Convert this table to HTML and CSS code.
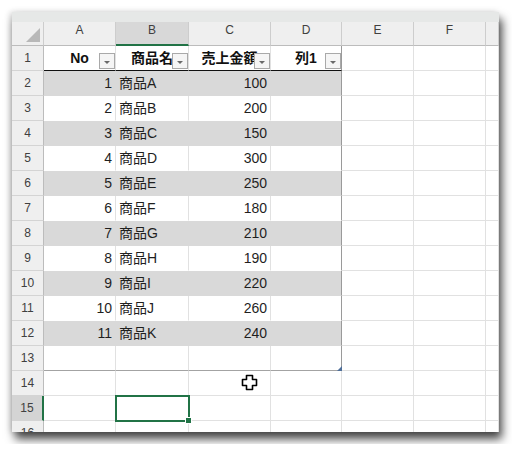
FILE: index.html
```html
<!DOCTYPE html>
<html lang="ja">
<head>
<meta charset="utf-8">
<link rel="stylesheet" href="styles.css">
</head>
<body>
<div class="window">
  <div class="strip"></div>
  <div class="sheet">
    <div class="row colhdr">
      <div class="c ch corner"><span class="tri"></span></div>
      <div class="c ch">A</div>
      <div class="c ch sel">B</div>
      <div class="c ch">C</div>
      <div class="c ch">D</div>
      <div class="c ch">E</div>
      <div class="c ch">F</div>
      <div class="c ch"></div>
    </div>
    <div class="row">
      <div class="c rh">1</div>
      <div class="c hd">No<span class="fb"></span></div>
      <div class="c hd">商品名<span class="fb"></span></div>
      <div class="c hd">売上金額<span class="fb"></span></div>
      <div class="c hd last">列1<span class="fb"></span></div>
      <div class="c"></div><div class="c"></div><div class="c"></div>
    </div>
    <div class="row">
      <div class="c rh">2</div>
      <div class="c band num">1</div><div class="c band txt">商品A</div><div class="c band num">100</div><div class="c band last"></div>
      <div class="c"></div><div class="c"></div><div class="c"></div>
    </div>
    <div class="row">
      <div class="c rh">3</div>
      <div class="c wt num">2</div><div class="c wt txt">商品B</div><div class="c wt num">200</div><div class="c wt last"></div>
      <div class="c"></div><div class="c"></div><div class="c"></div>
    </div>
    <div class="row">
      <div class="c rh">4</div>
      <div class="c band num">3</div><div class="c band txt">商品C</div><div class="c band num">150</div><div class="c band last"></div>
      <div class="c"></div><div class="c"></div><div class="c"></div>
    </div>
    <div class="row">
      <div class="c rh">5</div>
      <div class="c wt num">4</div><div class="c wt txt">商品D</div><div class="c wt num">300</div><div class="c wt last"></div>
      <div class="c"></div><div class="c"></div><div class="c"></div>
    </div>
    <div class="row">
      <div class="c rh">6</div>
      <div class="c band num">5</div><div class="c band txt">商品E</div><div class="c band num">250</div><div class="c band last"></div>
      <div class="c"></div><div class="c"></div><div class="c"></div>
    </div>
    <div class="row">
      <div class="c rh">7</div>
      <div class="c wt num">6</div><div class="c wt txt">商品F</div><div class="c wt num">180</div><div class="c wt last"></div>
      <div class="c"></div><div class="c"></div><div class="c"></div>
    </div>
    <div class="row">
      <div class="c rh">8</div>
      <div class="c band num">7</div><div class="c band txt">商品G</div><div class="c band num">210</div><div class="c band last"></div>
      <div class="c"></div><div class="c"></div><div class="c"></div>
    </div>
    <div class="row">
      <div class="c rh">9</div>
      <div class="c wt num">8</div><div class="c wt txt">商品H</div><div class="c wt num">190</div><div class="c wt last"></div>
      <div class="c"></div><div class="c"></div><div class="c"></div>
    </div>
    <div class="row">
      <div class="c rh">10</div>
      <div class="c band num">9</div><div class="c band txt">商品I</div><div class="c band num">220</div><div class="c band last"></div>
      <div class="c"></div><div class="c"></div><div class="c"></div>
    </div>
    <div class="row">
      <div class="c rh">11</div>
      <div class="c wt num">10</div><div class="c wt txt">商品J</div><div class="c wt num">260</div><div class="c wt last"></div>
      <div class="c"></div><div class="c"></div><div class="c"></div>
    </div>
    <div class="row">
      <div class="c rh">12</div>
      <div class="c band num">11</div><div class="c band txt">商品K</div><div class="c band num">240</div><div class="c band last"></div>
      <div class="c"></div><div class="c"></div><div class="c"></div>
    </div>
    <div class="row">
      <div class="c rh">13</div>
      <div class="c tbot"></div><div class="c tbot"></div><div class="c tbot"></div><div class="c tbot last rzcell"><span class="rz"></span></div>
      <div class="c"></div><div class="c"></div><div class="c"></div>
    </div>
    <div class="row">
      <div class="c rh">14</div>
      <div class="c"></div><div class="c"></div><div class="c"></div><div class="c"></div>
      <div class="c"></div><div class="c"></div><div class="c"></div>
    </div>
    <div class="row">
      <div class="c rh rsel">15</div>
      <div class="c"></div><div class="c selcell"><span class="handle"></span></div><div class="c"></div><div class="c"></div>
      <div class="c"></div><div class="c"></div><div class="c"></div>
    </div>
    <div class="row">
      <div class="c rh">16</div>
      <div class="c"></div><div class="c"></div><div class="c"></div><div class="c"></div>
      <div class="c"></div><div class="c"></div><div class="c"></div>
    </div>
  </div>
  <svg class="cursor" width="17" height="17" viewBox="0 0 17 17">
    <path d="M5.5 1.5 H11.5 V5.5 H15.5 V11.5 H11.5 V15.5 H5.5 V11.5 H1.5 V5.5 H5.5 Z" fill="#fff" stroke="#000" stroke-width="1.6" stroke-linejoin="round"/>
  </svg>
</div>
</body>
</html>
```

FILE: styles.css
```css
html, body {
  margin: 0;
  background: #fff;
}
body {
  padding: 12px;
  font-family: "Liberation Sans", "Noto Sans CJK JP", sans-serif;
}
.window {
  position: relative;
  width: 487px;
  height: 420px;
  overflow: hidden;
  background: #fff;
  box-shadow: 3px 7px 9px rgba(0, 0, 0, 0.72), -2px 0 6px rgba(0, 0, 0, 0.15);
}
.strip {
  height: 10px;
  background: #e6e8e7;
}
.row {
  display: grid;
  grid-template-columns: 32px 72px 73px 82px 71px 72px 72px 13px;
  height: 25px;
}
.row.colhdr {
  height: 24px;
}
.c {
  box-sizing: border-box;
  border-right: 1px solid #e1e1e1;
  border-bottom: 1px solid #e1e1e1;
  font-size: 14px;
  line-height: 24px;
  color: #1f1f1f;
  overflow: hidden;
  white-space: nowrap;
}
.ch {
  background: #efefef;
  border-right-color: #cdcdcd;
  border-bottom-color: #bcbcbc;
  color: #404040;
  font-size: 12px;
  line-height: 17px;
  text-align: center;
}
.ch.sel {
  background: #d8d8d8;
  border-bottom: 2px solid #217346;
}
.corner {
  display: flex;
  align-items: flex-end;
  justify-content: flex-end;
  padding: 0 3px 3px 0;
}
.tri {
  width: 14px;
  height: 14px;
  background: #b8b8b8;
  clip-path: polygon(100% 0, 100% 100%, 0 100%);
}
.rh {
  background: #efefef;
  border-right-color: #bcbcbc;
  border-bottom-color: #d4d4d4;
  color: #404040;
  font-size: 12px;
  text-align: center;
}
.rh.rsel {
  background: #d4d4d4;
  border-right: 2px solid #217346;
}
.hd {
  position: relative;
  background: #fff;
  font-weight: bold;
  text-align: center;
  color: #111;
  border-bottom: 1px solid #111;
}
.fb {
  position: absolute;
  right: 0;
  bottom: 1px;
  width: 16px;
  height: 16px;
  box-sizing: border-box;
  border: 1px solid #a9a9a9;
  background: #f5f5f5;
  display: flex;
  align-items: center;
  justify-content: center;
}
.fb::after {
  content: "";
  width: 0;
  height: 0;
  margin-top: 2px;
  border-left: 3px solid transparent;
  border-right: 3px solid transparent;
  border-top: 3px solid #6a6a6a;
}
.band {
  background: #d9d9d9;
  border-right-color: #d9d9d9;
  border-bottom-color: #d9d9d9;
}
.wt {
  background: #fff;
  border-bottom-color: #fff;
}
.num {
  text-align: right;
  padding-right: 3px;
}
.txt {
  padding-left: 3px;
}
.last {
  border-right-color: #9a9a9a;
}
.tbot {
  border-bottom-color: #a3a3a3;
}
.rzcell {
  position: relative;
  overflow: visible;
}
.rz {
  position: absolute;
  right: -1px;
  bottom: -1px;
  width: 5px;
  height: 5px;
  background: #4f6f99;
  clip-path: polygon(100% 0, 100% 100%, 0 100%);
}
.selcell {
  position: relative;
  overflow: visible;
  z-index: 1;
}
.selcell::before {
  content: "";
  position: absolute;
  left: -1px;
  top: -1px;
  right: -2px;
  bottom: -2px;
  border: 2px solid #217346;
}
.handle {
  position: absolute;
  right: -4px;
  bottom: -4px;
  width: 5px;
  height: 5px;
  background: #217346;
  border: 1px solid #fff;
  z-index: 2;
}
.cursor {
  position: absolute;
  left: 229px;
  top: 362px;
}
```
